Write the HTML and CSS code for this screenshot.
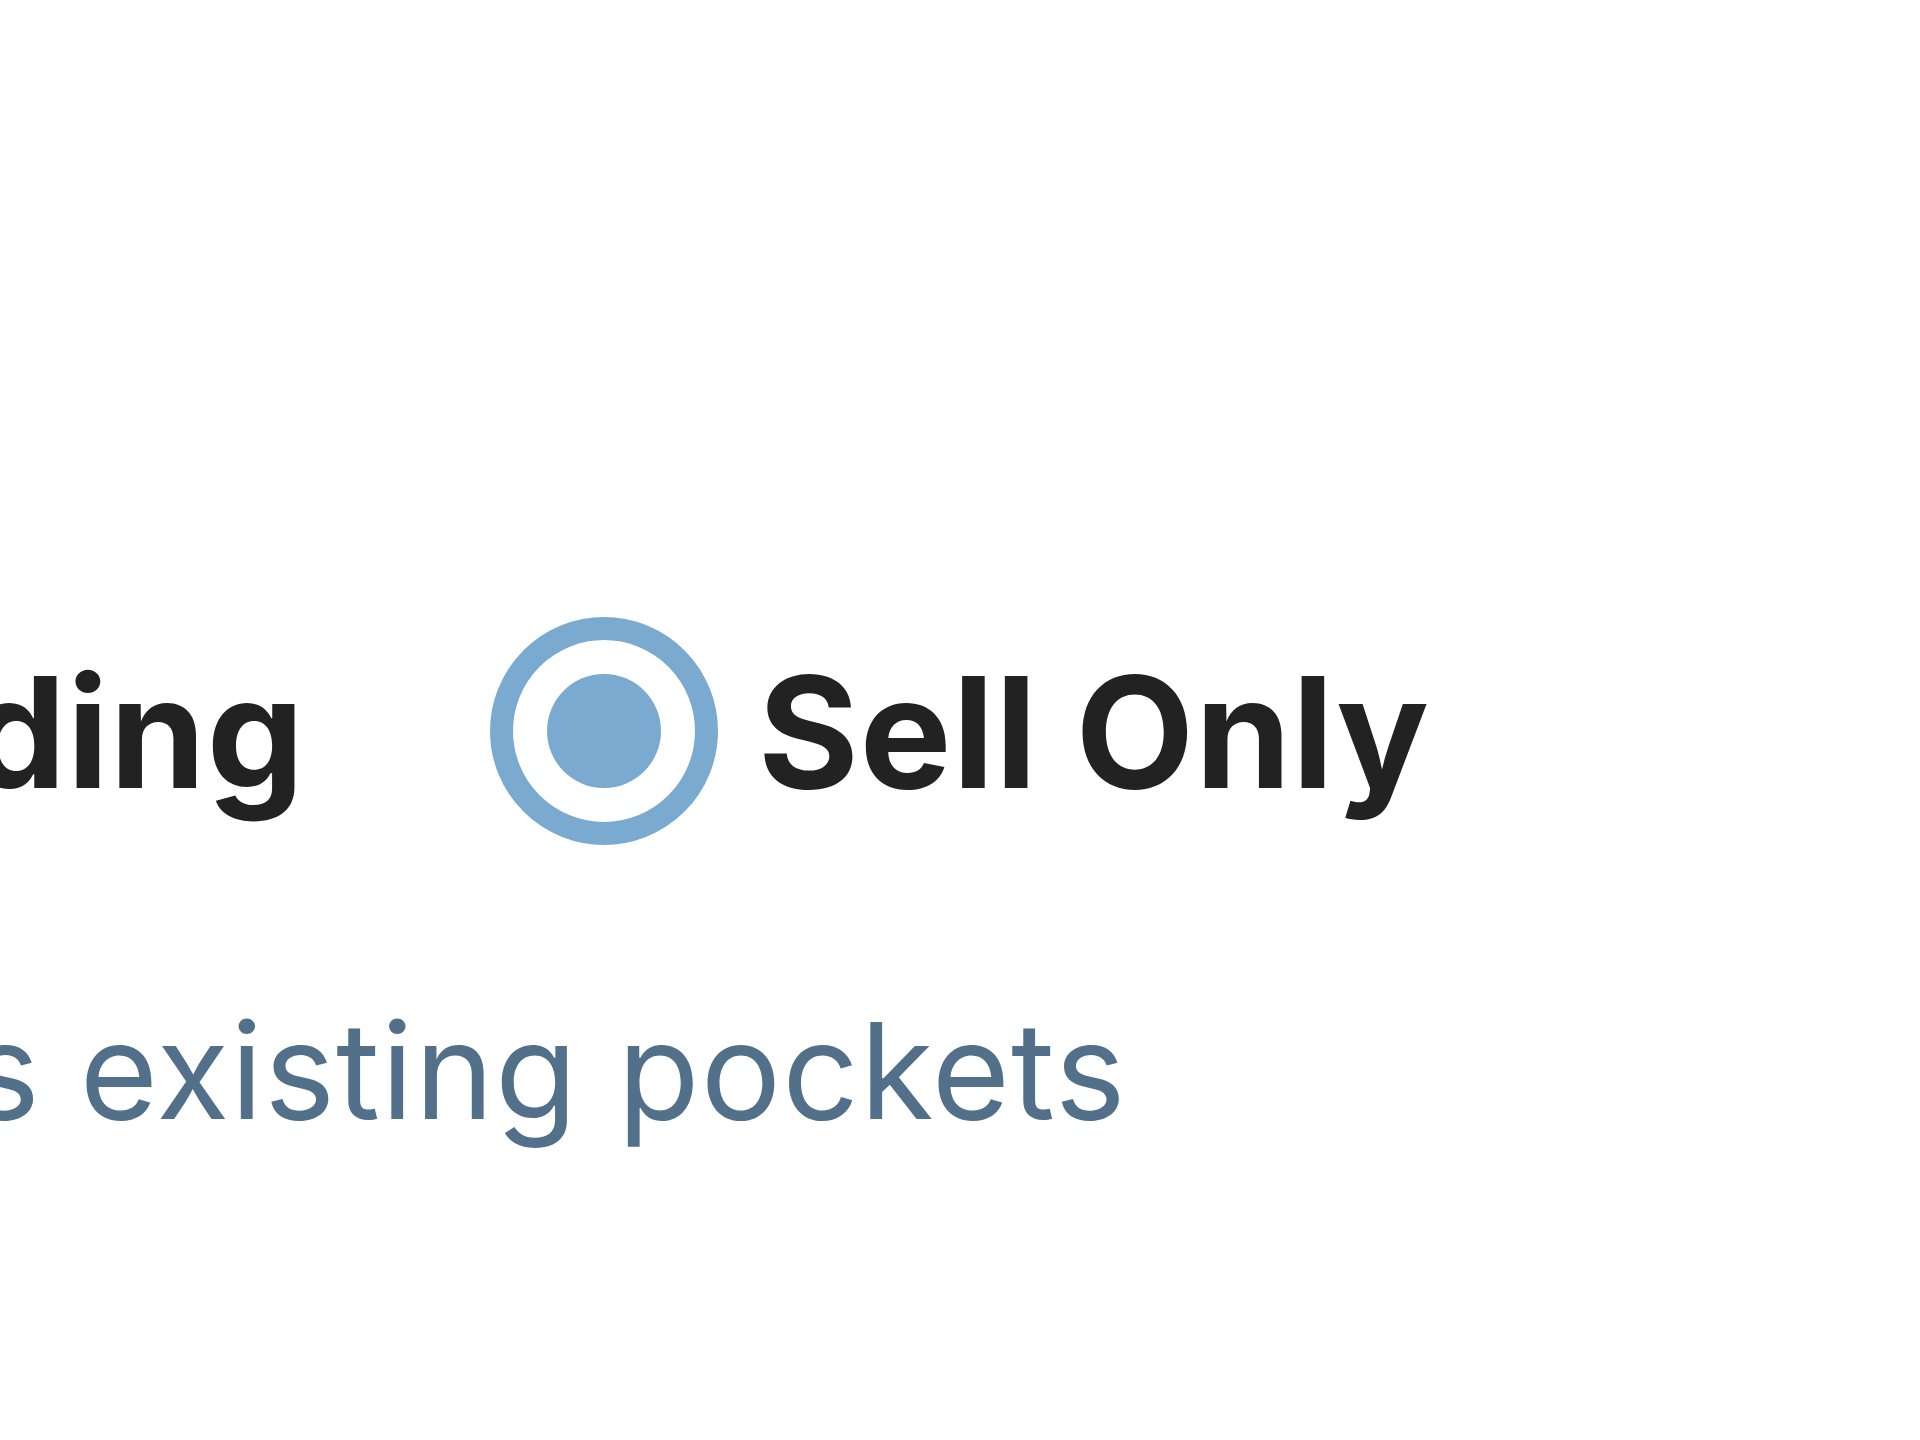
FILE: index.html
```html
<!DOCTYPE html>
<html lang="en">
<head>
<meta charset="utf-8">
<title>Sell Only</title>
<link rel="stylesheet" href="styles.css">
</head>
<body>
<main class="page">
  <div class="options">
    <span class="option-label option-label--cut">ding</span>
    <div class="option">
      <span class="radio radio--checked"><span class="radio-dot"></span></span>
      <span class="option-label">Sell Only</span>
    </div>
  </div>
  <p class="description">s existing pockets</p>
</main>
</body>
</html>
```
FILE: styles.css
```css
html, body {
  margin: 0;
  padding: 0;
  background: #ffffff;
}
body {
  width: 1920px;
  height: 1440px;
  overflow: hidden;
  font-family: "Inter", "Liberation Sans", sans-serif;
}
.page {
  padding-top: 640px;
  display: flex;
  flex-direction: column;
}
.options {
  display: flex;
  align-items: flex-start;
  gap: 185px;
}
.option-label {
  font-size: 154px;
  line-height: 185px;
  font-weight: 700;
  letter-spacing: 1px;
  color: #222222;
  white-space: nowrap;
}
.option-label--cut {
  margin-left: -31px;
}
.option {
  display: flex;
  align-items: flex-start;
  gap: 40px;
}
.radio {
  flex: none;
  box-sizing: border-box;
  width: 228px;
  height: 228px;
  border: 23px solid #7aaacf;
  border-radius: 50%;
  display: flex;
  align-items: center;
  justify-content: center;
  margin: -23px 0 -20px;
}
.radio-dot {
  width: 114px;
  height: 114px;
  border-radius: 50%;
  background: #7aaacf;
}
.description {
  margin: 165px 0 0 -31px;
  font-size: 134px;
  line-height: 161px;
  font-weight: 400;
  letter-spacing: 1.2px;
  color: #52708a;
  white-space: nowrap;
}
```
